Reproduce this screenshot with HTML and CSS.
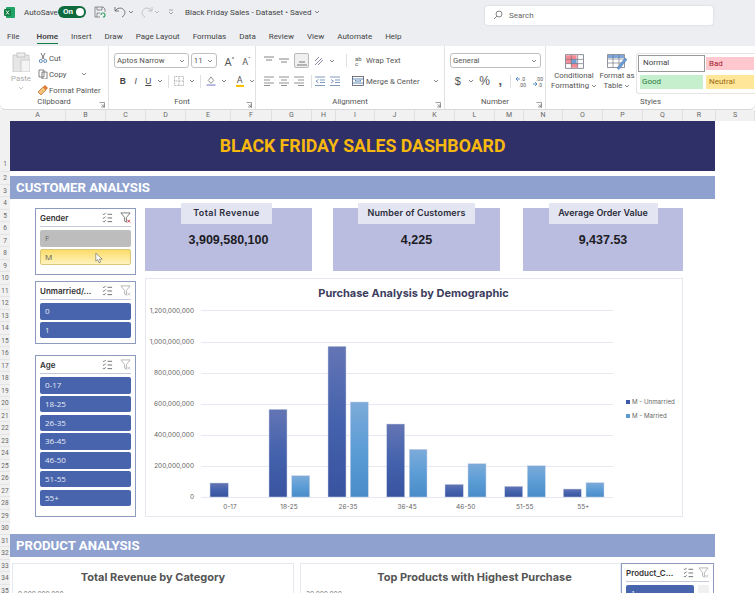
FILE: index.html
```html
<!DOCTYPE html>
<html lang="en">
<head>
  <meta charset="UTF-8">
  <meta name="viewport" content="width=device-width, initial-scale=1.0">
  <title>Black Friday Sales - Dataset</title>
  <link rel="stylesheet" href="styles.css">
</head>
<body>
  <svg class="defs" width="0" height="0">
    <defs>
      <symbol id="chev" viewBox="0 0 6 4"><path d="M1 1l2 2 2-2" fill="none" stroke="#666" stroke-width=".8"/></symbol>
      <symbol id="launch" viewBox="0 0 6 6"><path d="M.5 .5h5v5M5.500 5.500l-3-3M2 5h3V2" fill="none" stroke="#777" stroke-width=".7"/></symbol>
      <symbol id="multi" viewBox="0 0 12 12"><path d="M1 2l1 1 2-2M1 6l1 1 2-2M1 10l1 1 2-2M6 2.500h5M6 6.500h5M6 10.500h5" fill="none" stroke="#555" stroke-width=".9"/></symbol>
      <symbol id="filter" viewBox="0 0 12 12"><path d="M1 1h10L7 6v5L5 10V6z" fill="none" stroke="#aaa" stroke-width=".9"/><path d="M8 8.500l3 3M11 8.500l-3 3" stroke="#bbb" stroke-width=".9"/></symbol>
      <symbol id="filter-on" viewBox="0 0 12 12"><path d="M1 1h10L7 6v5L5 10V6z" fill="none" stroke="#666" stroke-width=".9"/><path d="M8 8.500l3 3M11 8.500l-3 3" stroke="#d3303a" stroke-width="1"/></symbol>
    </defs>
  </svg>

  <header class="titlebar">
    <svg class="logo" viewBox="0 0 11 11"><rect x="2" width="9" height="11" rx="1" fill="#21a366"/><rect y="2" width="7" height="7" rx="1" fill="#107c41"/><path d="M2 3.500l3 4M5 3.500l-3 4" stroke="#fff" stroke-width=".9"/></svg>
    <span class="autosave">AutoSave</span>
    <span class="toggle">On<i></i></span>
    <svg class="qa save" viewBox="0 0 12 12"><path d="M1 1h8l2 2v3M1 1v10h5M3 1v3h5V1M3 11V7h3" fill="none" stroke="#777" stroke-width=".8"/><path d="M7 9a2 2 0 1 1 2 2" fill="none" stroke="#2e9e5b" stroke-width="1.100"/></svg>
    <svg class="qa undo" viewBox="0 0 12 12"><path d="M1 1v4h4M1.200 5C3 2 7 1 9.500 3.500s1.500 6-1.500 7.500" fill="none" stroke="#666" stroke-width=".9"/></svg>
    <svg class="tiny" viewBox="0 0 6 4"><use href="#chev"/></svg>
    <svg class="qa redo" viewBox="0 0 12 12"><path d="M11 1v4H7M10.800 5C9 2 5 1 2.500 3.500S1 9.500 4 11" fill="none" stroke="#bbb" stroke-width=".9"/></svg>
    <svg class="tiny faint" viewBox="0 0 6 4"><use href="#chev"/></svg>
    <svg class="tiny custom" viewBox="0 0 6 6"><path d="M1 1h4M1 3l2 2 2-2" fill="none" stroke="#888" stroke-width=".7"/></svg>
    <span class="doc">Black Friday Sales - Dataset &bull; Saved</span>
    <svg class="tiny" viewBox="0 0 6 4"><use href="#chev"/></svg>
    <div class="search">
      <svg viewBox="0 0 10 10"><circle cx="6" cy="4" r="3" fill="none" stroke="#666" stroke-width=".8"/><path d="M3.800 6.200L1 9" stroke="#666" stroke-width=".8"/></svg>
      <span>Search</span>
    </div>
  </header>

  <nav class="tabs">
    <span class="file">File</span>
    <span class="active">Home</span>
    <span>Insert</span>
    <span>Draw</span>
    <span>Page Layout</span>
    <span>Formulas</span>
    <span>Data</span>
    <span>Review</span>
    <span>View</span>
    <span>Automate</span>
    <span>Help</span>
  </nav>

  <section class="ribbon">
    <div class="group clipboard">
      <div class="body">
        <div class="paste">
          <svg viewBox="0 0 18 20"><path d="M1 3h16v13h-6v4H1z" fill="#e6e6e6" stroke="#c4c4c4" stroke-width=".8"/><rect x="5" y="1" width="8" height="4" fill="#eee" stroke="#bbb" stroke-width=".8"/><rect x="9" y="8" width="9" height="12" fill="#f4f4f4" stroke="#c4c4c4" stroke-width=".8"/></svg>
          <span>Paste</span>
          <svg class="tiny faint" viewBox="0 0 6 4"><use href="#chev"/></svg>
        </div>
        <div class="clip-list">
          <div><svg viewBox="0 0 10 10"><path d="M3 0l3 6M7 0L4 6" stroke="#555" stroke-width=".8"/><circle cx="2.800" cy="8" r="1.500" fill="none" stroke="#3a6ea5" stroke-width=".8"/><circle cx="7.200" cy="8" r="1.500" fill="none" stroke="#3a6ea5" stroke-width=".8"/></svg>Cut</div>
          <div><svg viewBox="0 0 10 10"><path d="M1 1h5v7H1zM4 3h5v7H4z" fill="#fff" stroke="#666" stroke-width=".8"/></svg>Copy<svg class="tiny copy-chev" viewBox="0 0 6 4"><use href="#chev"/></svg></div>
          <div><svg viewBox="0 0 10 10"><path d="M0 7l5-5 3 3-5 5z" fill="#f3c27a" stroke="#c0672a" stroke-width=".7"/><path d="M5 2l2-2 3 3-2 2" fill="#e07a36"/></svg>Format Painter</div>
        </div>
      </div>
      <div class="label">Clipboard<svg class="launch" viewBox="0 0 6 6"><use href="#launch"/></svg></div>
    </div>

    <div class="group font-group">
      <div class="body stack">
        <div class="row row-top">
          <div class="select font-name">Aptos Narrow<svg class="tiny" viewBox="0 0 6 4"><use href="#chev"/></svg></div>
          <div class="select font-size">11<svg class="tiny" viewBox="0 0 6 4"><use href="#chev"/></svg></div>
          <span class="grow">A<sup>^</sup></span>
          <span class="grow small">A<sup>&#711;</sup></span>
        </div>
        <div class="row row-bottom">
          <b class="fmt">B</b><i class="fmt">I</i><u class="fmt">U</u>
          <svg class="tiny" viewBox="0 0 6 4"><use href="#chev"/></svg>
          <span class="sep"></span>
          <svg class="ic" viewBox="0 0 10 10"><path d="M.5 .5h9v9h-9zM.5 5h9M5 .5v9" fill="none" stroke="#999" stroke-width=".7" stroke-dasharray="1 .5"/></svg>
          <svg class="tiny" viewBox="0 0 6 4"><use href="#chev"/></svg>
          <span class="sep"></span>
          <svg class="ic" viewBox="0 0 10 11"><path d="M2 5l3-4 3 4-3 3z" fill="#fff" stroke="#555" stroke-width=".7"/><rect y="9" width="10" height="2" fill="#b4b4e0"/></svg>
          <svg class="tiny" viewBox="0 0 6 4"><use href="#chev"/></svg>
          <span class="font-color">A</span>
          <svg class="tiny" viewBox="0 0 6 4"><use href="#chev"/></svg>
        </div>
      </div>
      <div class="label">Font<svg class="launch" viewBox="0 0 6 6"><use href="#launch"/></svg></div>
    </div>

    <div class="group align-group">
      <div class="body stack">
        <div class="row row-top">
          <svg class="ic" viewBox="0 0 10 10"><path d="M0 1h10M2 4h6" stroke="#666" stroke-width=".8"/></svg>
          <svg class="ic" viewBox="0 0 10 10"><path d="M0 3h10M2 6h6" stroke="#666" stroke-width=".8"/></svg>
          <span class="picked"><svg class="ic" viewBox="0 0 10 10"><path d="M2 6h6M0 9h10" stroke="#555" stroke-width=".8"/></svg></span>
          <svg class="ic orient" viewBox="0 0 10 10"><path d="M1 9l7-7M1 5l4-4M4 9l5-5" stroke="#7a7a9a" stroke-width=".9"/></svg>
          <svg class="tiny" viewBox="0 0 6 4"><use href="#chev"/></svg>
          <span class="sep"></span>
          <span class="ab">ab<br>c</span><span class="cmd">Wrap Text</span>
        </div>
        <div class="row row-bottom">
          <svg class="ic" viewBox="0 0 10 10"><path d="M0 1h10M0 4h6M0 7h10M0 9.500h6" stroke="#666" stroke-width=".7"/></svg>
          <svg class="ic" viewBox="0 0 10 10"><path d="M0 1h10M2 4h6M0 7h10M2 9.500h6" stroke="#666" stroke-width=".7"/></svg>
          <svg class="ic" viewBox="0 0 10 10"><path d="M0 1h10M4 4h6M0 7h10M4 9.500h6" stroke="#666" stroke-width=".7"/></svg>
          <span class="sep"></span>
          <svg class="ic indent" viewBox="0 0 10 10"><path d="M0 1h10M5 4h5M5 6.500h5M0 9.500h10M3.500 3.500L1 5.200l2.500 1.800" fill="none" stroke="#4a6fa5" stroke-width=".7"/></svg>
          <svg class="ic" viewBox="0 0 10 10"><path d="M0 1h10M5 4h5M5 6.500h5M0 9.500h10M1 3.500l2.500 1.700L1 7" fill="none" stroke="#4a6fa5" stroke-width=".7"/></svg>
          <svg class="ic merge" viewBox="0 0 12 10"><rect x=".5" y=".5" width="11" height="9" fill="#fff" stroke="#556" stroke-width=".8"/><path d="M.5 3h11M.5 7h11M3 5h6M3 5l1-1M9 5L8 4" fill="none" stroke="#3a6ea5" stroke-width=".8"/></svg>
          <span class="cmd">Merge &amp; Center</span>
          <svg class="tiny merge-chev" viewBox="0 0 6 4"><use href="#chev"/></svg>
        </div>
      </div>
      <div class="label">Alignment<svg class="launch" viewBox="0 0 6 6"><use href="#launch"/></svg></div>
    </div>

    <div class="group number-group">
      <div class="body stack">
        <div class="row row-top">
          <div class="select general">General<svg class="tiny" viewBox="0 0 6 4"><use href="#chev"/></svg></div>
        </div>
        <div class="row row-bottom">
          <span class="sym">$</span>
          <svg class="tiny" viewBox="0 0 6 4"><use href="#chev"/></svg>
          <span class="sym pct">%</span>
          <span class="sym comma">,</span>
          <span class="sep"></span>
          <svg class="ic dec" viewBox="0 0 12 11"><path d="M0 3h4M2 1L0 3l2 2" fill="none" stroke="#3a7ab8" stroke-width=".8"/><text x="5" y="5" class="dec-text">.0</text><text x="3" y="11" class="dec-text">.00</text></svg>
          <svg class="ic dec" viewBox="0 0 12 11"><path d="M0 8h4M2 6l2 2-2 2" fill="none" stroke="#3a7ab8" stroke-width=".8"/><text x="3" y="5" class="dec-text">.00</text><text x="5" y="11" class="dec-text">.0</text></svg>
        </div>
      </div>
      <div class="label">Number<svg class="launch" viewBox="0 0 6 6"><use href="#launch"/></svg></div>
    </div>

    <div class="group styles-group">
      <div class="body styles-body">
        <div class="big">
          <svg viewBox="0 0 18 14"><path d="M.5 .5h17v13H.5z" fill="#fff" stroke="#667" stroke-width=".7"/><path d="M1 1h10v4H1zM6 9h6v4H6z" fill="#f58a94"/><path d="M1 5h5v4H1z" fill="#f58a94"/><path d="M6 5h5v4H6z" fill="#6d9fd8"/><path d="M6 1v12M12 1v12M1 5h16M1 9h16" stroke="#667" stroke-width=".6"/></svg>
          <span>Conditional</span>
          <span>Formatting<svg class="tiny" viewBox="0 0 6 4"><use href="#chev"/></svg></span>
        </div>
        <div class="big">
          <svg viewBox="0 0 20 16"><path d="M.5 .5h17v13H.5z" fill="#fff" stroke="#667" stroke-width=".7"/><path d="M1 1h16v3H1z" fill="#7fa8d8"/><path d="M6 1v12M12 1v12M1 5h16M1 9h16" stroke="#667" stroke-width=".6"/><path d="M10 14l8-10 2 1.500-8 10z" fill="#6d9fd8" stroke="#4b6f9c" stroke-width=".5"/></svg>
          <span>Format as</span>
          <span>Table<svg class="tiny" viewBox="0 0 6 4"><use href="#chev"/></svg></span>
        </div>
        <div class="gallery">
          <span class="cell normal">Normal</span>
          <span class="cell bad">Bad</span>
          <span class="cell good">Good</span>
          <span class="cell neutral">Neutral</span>
        </div>
      </div>
      <div class="label">Styles</div>
    </div>
  </section>

  <div class="colheads">
    <span class="corner"></span>
    <span>A</span><span>B</span><span>C</span><span>D</span><span>E</span><span>F</span><span>G</span><span>H</span><span>I</span><span>J</span>
    <span>K</span><span>L</span><span>M</span><span>N</span><span>O</span><span>P</span><span>Q</span><span>R</span><span>S</span>
  </div>

  <div class="sheet">
    <div class="rowheads">
      <span class="first">1</span>
      <span>2</span><span>3</span><span>4</span><span>5</span><span>6</span><span>7</span><span>8</span><span>9</span><span>10</span>
      <span>11</span><span>12</span><span>13</span><span>14</span><span>15</span><span>16</span><span>17</span><span>18</span><span>19</span><span>20</span>
      <span>21</span><span>22</span><span>23</span><span>24</span><span>25</span><span>26</span><span>27</span><span>28</span><span>29</span><span>30</span>
      <span>31</span><span>32</span><span>33</span><span>34</span><span>35</span>
    </div>

    <main class="dash">
      <h1 class="banner">BLACK FRIDAY SALES DASHBOARD</h1>
      <h2 class="section">CUSTOMER ANALYSIS</h2>

      <div class="customer">
        <div class="slicers">
          <div class="slicer gender">
            <div class="slicer-head"><span>Gender</span><svg viewBox="0 0 12 12"><use href="#multi"/></svg><svg viewBox="0 0 12 12"><use href="#filter-on"/></svg></div>
            <div class="item off">F</div>
            <div class="item on">M
              <svg class="cursor" viewBox="0 0 10 14"><path d="M1 1v10l2.500-2 1.500 4 2-.8L5.500 8.500H9z" fill="#fff" stroke="#555" stroke-width=".7"/></svg>
            </div>
          </div>
          <div class="slicer married">
            <div class="slicer-head"><span>Unmarried/...</span><svg viewBox="0 0 12 12"><use href="#multi"/></svg><svg viewBox="0 0 12 12"><use href="#filter"/></svg></div>
            <div class="item">0</div>
            <div class="item">1</div>
          </div>
          <div class="slicer age">
            <div class="slicer-head"><span>Age</span><svg viewBox="0 0 12 12"><use href="#multi"/></svg><svg viewBox="0 0 12 12"><use href="#filter"/></svg></div>
            <div class="item">0-17</div>
            <div class="item">18-25</div>
            <div class="item">26-35</div>
            <div class="item">36-45</div>
            <div class="item">46-50</div>
            <div class="item">51-55</div>
            <div class="item">55+</div>
          </div>
        </div>

        <div class="overview">
          <div class="kpis">
            <div class="kpi revenue"><span class="kpi-tab">Total Revenue</span><span class="kpi-value">3,909,580,100</span></div>
            <div class="kpi customers"><span class="kpi-tab">Number of Customers</span><span class="kpi-value">4,225</span></div>
            <div class="kpi order"><span class="kpi-tab">Average Order Value</span><span class="kpi-value">9,437.53</span></div>
          </div>

          <div class="chart">
            <svg viewBox="145 278 538 239" width="538" height="239">
              <defs>
                <linearGradient id="dark" x1="0" y1="0" x2="0" y2="1"><stop offset="0" stop-color="#6475b4"/><stop offset=".5" stop-color="#4462ad"/><stop offset="1" stop-color="#39539f"/></linearGradient>
                <linearGradient id="light" x1="0" y1="0" x2="0" y2="1"><stop offset="0" stop-color="#7dabd9"/><stop offset=".5" stop-color="#5c9dd6"/><stop offset="1" stop-color="#4a8cc9"/></linearGradient>
              </defs>
              <text class="chart-title" x="413.500" y="297">Purchase Analysis by Demographic</text>
              <g class="grid">
                <path d="M201 310.500h412M201 342.500h412M201 373.500h412M201 404.500h412M201 435.500h412M201 466.500h412M201 497.500h412"/>
              </g>
              <g class="axis-y">
                <text x="194" y="313">1,200,000,000</text>
                <text x="194" y="344">1,000,000,000</text>
                <text x="194" y="375">800,000,000</text>
                <text x="194" y="406">600,000,000</text>
                <text x="194" y="437">400,000,000</text>
                <text x="194" y="468">200,000,000</text>
                <text x="194" y="499">0</text>
              </g>
              <g fill="url(#dark)" class="bars">
                <rect x="210" y="483" width="18.300" height="14"/>
                <rect x="269" y="409.300" width="18" height="87.700"/>
                <rect x="328" y="346.300" width="18" height="150.700"/>
                <rect x="386.700" y="424" width="18" height="73"/>
                <rect x="445" y="484.300" width="18.300" height="12.700"/>
                <rect x="504.700" y="486.300" width="18" height="10.700"/>
                <rect x="563.300" y="489" width="18" height="8"/>
              </g>
              <g fill="url(#light)" class="bars">
                <rect x="291.700" y="475.700" width="18" height="21.300"/>
                <rect x="350.300" y="402" width="18" height="95"/>
                <rect x="409.300" y="449.300" width="17.700" height="47.700"/>
                <rect x="468" y="463.700" width="18" height="33.300"/>
                <rect x="527.300" y="465.700" width="18" height="31.300"/>
                <rect x="586" y="482.700" width="18" height="14.300"/>
              </g>
              <g class="axis-x">
                <text x="230" y="509">0-17</text>
                <text x="289" y="509">18-25</text>
                <text x="348" y="509">26-35</text>
                <text x="407" y="509">36-45</text>
                <text x="465.700" y="509">46-50</text>
                <text x="524.700" y="509">51-55</text>
                <text x="583.300" y="509">55+</text>
              </g>
              <g class="legend">
                <rect x="626" y="400" width="4" height="4" fill="#3f5ba7"/>
                <text x="632" y="404">M - Unmarried</text>
                <rect x="626" y="414" width="4" height="4" fill="#5b9bd5"/>
                <text x="632" y="418">M - Married</text>
              </g>
            </svg>
          </div>
        </div>
      </div>

      <h2 class="section product-head">PRODUCT ANALYSIS</h2>

      <div class="product">
        <div class="card cat"><h3>Total Revenue by Category</h3><span class="tick">9,000,000,000</span></div>
        <div class="card top"><h3>Top Products with Highest Purchase</h3><span class="tick">30,000,000</span></div>
        <div class="slicer category">
          <div class="slicer-head"><span>Product_C...</span><svg viewBox="0 0 12 12"><use href="#multi"/></svg><svg viewBox="0 0 12 12"><use href="#filter"/></svg></div>
          <div class="list"><div class="item">1</div><span class="scroll"></span></div>
        </div>
      </div>
    </main>
  </div>
</body>
</html>
```

FILE: styles.css
```css
html,body{ margin:0; padding:0; width:755px; height:593px; overflow:hidden; }
body{ background:#fff; font-family:"Roboto","Open Sans",sans-serif; color:#444; }
h1,h2,h3{ margin:0; }
svg{ display:block; flex:none; }
.defs{ position:absolute; }
.tiny{ width:6px; height:4px; }
.faint{ opacity:.45; }
.ic{ width:10px; height:10px; }

/* title bar */
.titlebar{ height:30px; background:#eceef2; display:flex; align-items:center; padding-left:4px; font-size:8px; box-sizing:border-box; padding-bottom:6px; }
.logo{ width:11px; height:11px; }
.autosave{ margin-left:9px; width:34px; }
.toggle{ width:28px; height:12px; border-radius:6px; background:#0f6b3e; color:#fff; font-weight:700; line-height:12px; padding-left:5px; box-sizing:border-box; position:relative; }
.toggle i{ position:absolute; right:2px; top:2px; width:8px; height:8px; border-radius:50%; background:#fff; }
.qa{ width:12px; height:12px; }
.save{ margin-left:8px; }
.undo{ margin-left:8px; }
.undo + .tiny{ margin-left:2px; }
.redo{ margin-left:7px; }
.redo + .tiny{ margin-left:1px; }
.custom{ height:6px; margin-left:8px; }
.doc{ margin-left:11px; color:#444; margin-right:2px; white-space:nowrap; }
.search{ width:228px; height:19px; margin-left:auto; margin-right:42px; margin-top:6px; background:#fff; border-radius:3px; box-shadow:0 0 2px #c6c8cc; display:flex; align-items:center; color:#666; gap:6px; padding-left:8px; box-sizing:border-box; }
.search svg{ width:10px; height:10px; }

/* tabs */
.tabs{ height:16px; background:#eceef2; display:flex; gap:13px; padding-left:7px; font-size:8px; line-height:14px; box-sizing:border-box; white-space:nowrap; }
.tabs .file{ margin-right:4px; }
.tabs .active{ font-weight:600; border-bottom:1.500px solid #107c41; height:13px; }

/* ribbon */
.ribbon{ height:63px; background:#fff; display:flex; font-size:7.800px; box-shadow:0 1px 1px #d4d4d4; border-radius:5px; white-space:nowrap; }
.group{ position:relative; box-sizing:border-box; border-right:1px solid #e2e2e2; display:flex; flex-direction:column; }
.clipboard{ width:109px; }
.font-group{ width:147px; }
.align-group{ width:189px; }
.number-group{ width:101px; }
.styles-group{ width:209px; border:0; }
.body{ height:51px; display:flex; }
.stack{ flex-direction:column; }
.label{ text-align:center; color:#555; font-size:7.800px; line-height:10px; }
.launch{ position:absolute; right:3px; bottom:1px; width:6px; height:6px; }
.row{ display:flex; align-items:center; gap:5px; }
.row-top{ height:17px; margin-top:6px; }
.row-bottom{ height:14px; margin-top:5px; }
.sep{ width:1px; height:13px; background:#e0e0e0; }

.paste{ width:42px; display:flex; flex-direction:column; align-items:center; padding-top:6px; color:#aaa; }
.paste > svg:first-child{ width:18px; height:20px; }
.paste span{ margin-top:2px; line-height:9px; }
.paste .tiny{ margin-top:3px; }
.clip-list{ padding-top:4px; }
.clip-list div{ height:16px; display:flex; align-items:center; gap:1px; color:#555; }
.clip-list svg{ width:10px; height:10px; margin-left:-4px; }
.clip-list .copy-chev{ width:6px; height:4px; margin-left:13px; }

.font-group .row{ padding-left:5px; }
.select{ height:15px; border:1px solid #c0c0c0; border-radius:3px; display:flex; align-items:center; justify-content:space-between; padding:0 3px 0 2px; box-sizing:border-box; color:#555; }
.font-name{ width:76px; }
.font-size{ width:27px; margin-left:-3px; }
.grow{ font-size:11px; color:#555; margin-left:2px; width:13px; line-height:12px; }
.grow sup{ font-size:6px; color:#333; }
.grow.small{ font-size:9px; margin-left:0; }
.font-group .row-bottom{ padding-left:10px; }
.fmt{ width:11px; text-align:center; font-size:8.500px; font-family:"Liberation Sans",sans-serif; color:#444; }
.font-color{ width:12px; text-align:center; font-size:9px; line-height:10px; border-bottom:2.500px solid #fec000; margin-left:4px; color:#555; }

.align-group .row{ padding-left:8px; }
.picked{ width:15px; height:15px; border:1px solid #b8b8b8; background:#f0f0f0; border-radius:2px; box-sizing:border-box; display:flex; align-items:center; justify-content:center; }
.orient{ margin-left:0; }
.align-group .row-top .sep{ margin:0 3px 0 6px; }
.ab{ font-size:6px; line-height:5px; color:#555; width:10px; }
.cmd{ color:#555; margin-left:-3px; }
.row-top .cmd{ margin-left:-4px; }
.align-group .row-bottom .sep{ margin:0 2px; }
.indent{ margin-left:-4px; }
.merge{ width:12px; margin-left:7px; }
.merge-chev{ margin-left:8px; }

.number-group .row{ padding-left:5px; }
.general{ width:91px; }
.sym{ font-size:11px; color:#555; width:11px; text-align:center; font-family:"Liberation Sans",sans-serif; }
.number-group .row-bottom{ padding-left:8px; }
.pct{ font-size:12px; width:13px; }
.comma{ font-weight:700; font-size:13px; line-height:8px; }
.dec{ width:12px; height:11px; }
.dec-text{ font-size:5px; fill:#555; }

.styles-body{ padding-top:8px; box-sizing:border-box; }
.big{ width:56px; flex:none; display:flex; flex-direction:column; align-items:center; color:#555; line-height:10px; }
.big + .big{ width:52px; margin-left:-11px; }
.big > svg:first-child{ width:19px; height:15px; margin-bottom:2px; }
.big + .big > svg:first-child{ width:20px; height:16px; margin-bottom:1px; }
.big span{ display:flex; align-items:center; gap:2px; }
.gallery{ width:119px; flex:none; height:41px; margin-left:-7px; margin-top:-1px; border:1px solid #e4e4e4; border-right:0; border-radius:3px 0 0 3px; display:grid; grid-template-columns:67px 1fr; grid-template-rows:17px 14px; gap:3px 1px; padding:1px; box-sizing:border-box; font-size:8px; }
.cell{ padding-left:3px; line-height:14px; }
.normal{ border:1px solid #999; background:#fff; color:#444; padding-left:4px; }
.bad{ background:#ffc7ce; color:#a32030; margin-top:2px; height:13px; }
.good{ background:#c6efce; color:#287a3a; margin:0 2px; padding-left:2px; }
.neutral{ background:#ffe699; color:#9c6a10; }

/* sheet headers */
.colheads{ height:11px; margin-top:1px; display:grid; grid-template-columns:10px 56px 40px 40px 40px 45px 41px 40px 24px 39px 40px 40px 40px 29px 39px 40px 40px 40px 33px 39px; background:#f1f1f1; font-size:7px; line-height:11px; color:#666; text-align:center; }
.colheads span + span{ border-right:1px solid #e0e0e0; }
.sheet{ display:flex; height:472px; overflow:hidden; }
.rowheads{ width:10px; background:#f1f1f1; font-size:6.500px; color:#666; flex:none; }
.rowheads span{ display:block; height:12.500px; line-height:12.500px; text-align:center; border-bottom:1px solid #e4e4e4; box-sizing:border-box; }
.rowheads .first{ height:51px; line-height:86px; }

/* dashboard */
.dash{ width:705px; flex:none; }
.banner{ height:50px; background:#2f3068; color:#f9b80e; font-family:"Roboto",sans-serif; font-size:17.700px; font-weight:700; text-align:center; line-height:50px; }
.section{ height:23px; margin-top:5px; background:#8fa2cf; color:#fff; font-family:"Roboto",sans-serif; font-size:13.200px; line-height:23px; font-weight:700; padding-left:6px; box-sizing:border-box; }
.customer{ display:flex; gap:9px; margin-top:9px; padding-left:25px; }

.slicers{ width:101px; display:flex; flex-direction:column; }
.slicer{ border:1px solid #8e9bc0; box-sizing:border-box; padding:0 4px; background:#fff; }
.gender{ height:67px; }
.married{ height:63px; margin-top:6px; }
.age{ height:162px; margin-top:11px; }
.slicer-head{ height:17px; border-bottom:1px solid #c3c8da; display:flex; align-items:center; gap:7px; font-family:"Inter",sans-serif; font-size:8px; font-weight:600; color:#333; margin-bottom:3px; }
.slicer-head span{ flex:1; white-space:nowrap; }
.slicer-head svg{ width:11px; height:11px; }
.item{ height:16.500px; margin-bottom:2.300px; border-radius:2px; background:#4764ad; color:#e8ecf6; font-size:8px; font-family:"Open Sans",sans-serif; line-height:16px; padding-left:5px; box-sizing:border-box; position:relative; }
.off{ background:#bdbdbd; color:#666; }
.on{ background:linear-gradient(#fbdc6a,#fff3bd); color:#555; border:1px solid #d8c878; padding-left:4px; line-height:14px; }
.cursor{ position:absolute; left:54px; top:2px; width:8px; height:12px; }

.overview{ width:538px; }
.kpis{ display:flex; gap:21px; }
.kpi{ width:167px; height:63px; background:#babde0; display:flex; flex-direction:column; align-items:center; }
.kpi.order{ width:160px; margin-left:2px; }
.kpi-tab{ height:21px; margin-top:-5px; background:#e3e5f2; font-family:"Inter",sans-serif; font-size:9px; font-weight:600; line-height:20px; color:#2c2d3a; text-align:center; }
.revenue .kpi-tab{ width:91px; margin-right:4px; letter-spacing:.4px; }
.customers .kpi-tab{ width:117px; letter-spacing:.1px; }
.order .kpi-tab{ width:109px; }
.kpi-value{ font-family:"Liberation Sans",sans-serif; font-size:12.500px; font-weight:700; color:#1c1c24; margin-top:8px; line-height:16px; }

.chart{ height:239px; margin-top:7px; outline:1px solid #e6e8f0; outline-offset:-1px; }
.chart-title{ font-family:"Inter",sans-serif; font-size:11px; font-weight:700; fill:#3c3d5e; text-anchor:middle; }
.grid path{ stroke:#e8e8f2; stroke-width:1; fill:none; }
.axis-y text{ font-size:6.500px; fill:#666; text-anchor:end; font-family:"Inter",sans-serif; }
.axis-x text{ font-size:6.500px; fill:#666; text-anchor:middle; font-family:"Inter",sans-serif; }
.legend text{ font-size:6.200px; fill:#666; font-family:"Inter",sans-serif; }
.bars rect{ stroke:#c9d3e8; stroke-width:.5; }

.product-head{ margin-top:17px; }
.product{ display:flex; margin-top:6px; padding-left:2px; height:60px; }
.card{ border:1px solid #e6e8f0; box-sizing:border-box; text-align:center; position:relative; }
.card h3{ font-family:"Inter",sans-serif; font-size:11px; font-weight:700; color:#555; margin-top:6px; line-height:14px; }
.tick{ position:absolute; top:26px; left:5px; font-size:6.500px; color:#777; font-family:"Inter",sans-serif; }
.cat{ width:282px; }
.top{ width:321px; margin-left:6px; padding-left:28px; }
.category{ width:93px; padding:0 4px; }
.category .slicer-head{ gap:4px; margin-bottom:3px; }
.list{ display:flex; justify-content:space-between; }
.list .item{ width:68px; height:20px; margin:0; }
.scroll{ width:11px; height:20px; background:#f0f0f0; }
```
